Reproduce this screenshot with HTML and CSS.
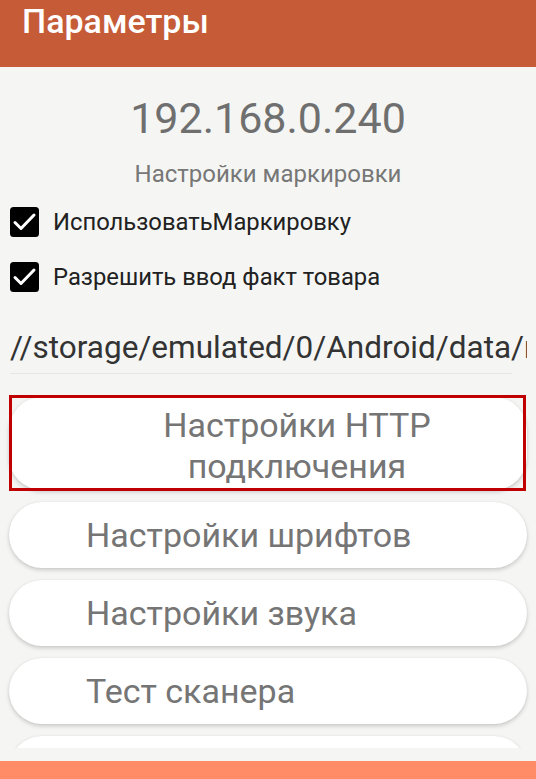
FILE: index.html
```
<!DOCTYPE html>
<html lang="ru">
<head>
    <meta charset="UTF-8">
    <meta name="viewport" content="width=device-width, initial-scale=1.0">
    <title>Параметры</title>
    <link rel="stylesheet" href="styles.css">
</head>
<body>
    <header class="toolbar">
        <h1>Параметры</h1>
    </header>

    <main class="content">
        <div class="ip">192.168.0.240</div>
        <div class="section-title">Настройки маркировки</div>

        <label class="check-row first">
            <svg class="check-box" viewBox="0 0 29 30" width="29" height="30">
                <rect x="0" y="0" width="29" height="30" rx="3.5" fill="#000"/>
                <polyline points="5,15.5 11,21.5 24,8" fill="none" stroke="#fff" stroke-width="3" stroke-linecap="round" stroke-linejoin="round"/>
            </svg>
            <span>ИспользоватьМаркировку</span>
        </label>
        <label class="check-row">
            <svg class="check-box" viewBox="0 0 29 30" width="29" height="30">
                <rect x="0" y="0" width="29" height="30" rx="3.5" fill="#000"/>
                <polyline points="5,15.5 11,21.5 24,8" fill="none" stroke="#fff" stroke-width="3" stroke-linecap="round" stroke-linejoin="round"/>
            </svg>
            <span>Разрешить ввод факт товара</span>
        </label>

        <div class="path-field">
            <div class="path-text">//storage/emulated/0/Android/data/r</div>
        </div>

        <div class="buttons">
            <button class="btn btn-tall selected">Настройки HTTP подключения</button>
            <button class="btn">Настройки шрифтов</button>
            <button class="btn">Настройки звука</button>
            <button class="btn">Тест сканера</button>
            <button class="btn"></button>
        </div>
    </main>

    <div class="bottom-gap"></div>
    <footer class="bottom-bar"></footer>
</body>
</html>
```

FILE: styles.css
```
body {
    font-family: 'Roboto', 'Noto Sans', sans-serif;
    margin: 0;
    padding: 0;
    width: 536px;
    height: 779px;
    display: flex;
    flex-direction: column;
    background-color: #f5f6f4;
    overflow: hidden;
}

.toolbar {
    height: 67px;
    flex-shrink: 0;
    background-color: #c55b37;
    padding-left: 22px;
}

.toolbar h1 {
    margin: 0;
    color: #fff;
    font-size: 34px;
    font-weight: 500;
    line-height: 40px;
    margin-top: 1px;
}

.content {
    flex: 1;
    min-height: 0;
    overflow: hidden;
}

.ip {
    text-align: center;
    color: #6f6f6f;
    font-size: 43px;
    line-height: 52px;
    margin-top: 25px;
}

.section-title {
    text-align: center;
    color: #777;
    font-size: 24px;
    line-height: 28px;
    margin-top: 16px;
}

.check-row {
    display: flex;
    align-items: center;
    height: 55px;
    padding-left: 10px;
    color: #212121;
    font-size: 23.8px;
}

.check-row.first {
    margin-top: 6px;
}

.check-box {
    flex-shrink: 0;
    margin-right: 14px;
}

.path-field {
    margin: 25px 24px 0 10px;
    padding-bottom: 6px;
    border-bottom: 1px solid #e6e7e5;
}

.path-text {
    width: calc(100% + 15px);
    overflow: hidden;
    white-space: nowrap;
    color: #333;
    font-size: 31.5px;
    line-height: 38px;
}

.buttons {
    display: flex;
    flex-direction: column;
    gap: 12px;
    padding: 23px 9px 0 9px;
}

.btn {
    font-family: inherit;
    height: 66px;
    flex-shrink: 0;
    border: none;
    border-radius: 33px;
    background-color: #fff;
    box-shadow: 0 2px 4px rgba(0, 0, 0, 0.18), 0 0 2px rgba(0, 0, 0, 0.06);
    color: #757575;
    font-size: 34px;
    text-align: left;
    padding: 0 16px 0 77px;
}

.btn-tall {
    height: 93px;
    text-align: center;
    padding: 4px 12px 0 70px;
    line-height: 41px;
}

.selected {
    position: relative;
}

.selected::after {
    content: "";
    position: absolute;
    top: -2px;
    left: 0;
    right: 1px;
    bottom: -1px;
    border: 3px solid #c00000;
}

.bottom-gap {
    height: 13px;
    flex-shrink: 0;
}

.bottom-bar {
    height: 18px;
    flex-shrink: 0;
    background-color: #ff8c66;
}
```
